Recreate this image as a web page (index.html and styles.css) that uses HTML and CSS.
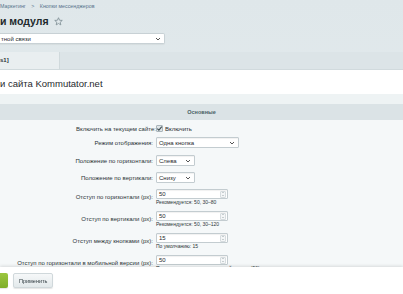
FILE: index.html
```html
<!DOCTYPE html>
<html lang="ru">
<head>
    <meta charset="UTF-8">
    <meta name="viewport" content="width=device-width, initial-scale=1.0">
    <title>Настройки модуля</title>
    <link rel="stylesheet" href="styles.css">
</head>
<body>
    <div class="crumbs">
        <a href="#">Маркетинг</a>
        <span class="sep">&gt;</span>
        <a href="#">Кнопки мессенджеров</a>
    </div>

    <div class="title-row">
        <h1>и модуля</h1>
        <svg class="star" width="9" height="9" viewBox="0 0 10 10">
            <path d="M5 0.8 L6.2 3.6 L9.2 3.8 L6.9 5.8 L7.6 8.8 L5 7.2 L2.4 8.8 L3.1 5.8 L0.8 3.8 L3.8 3.6 Z" fill="none" stroke="#7d8d93" stroke-width="0.9" stroke-linejoin="round"/>
        </svg>
    </div>

    <div class="site-select">
        <span>тной связи</span>
        <svg width="6" height="4" viewBox="0 0 6 4"><path d="M1 1 L3 3 L5 1" fill="none" stroke="#555" stroke-width="1"/></svg>
    </div>

    <div class="tabs">
        <div class="tab">s1]</div>
    </div>

    <div class="panel">
        <div class="panel-title">и сайта Kommutator.net</div>
        <div class="band"></div>
        <div class="section-head">Основные</div>

        <table class="form">
            <tr class="first">
                <td class="label">Включить на текущем сайте:</td>
                <td class="field">
                    <label class="check">
                        <span class="box">
                            <svg width="7" height="7" viewBox="0 0 7 7"><path d="M1.3 3.6 L2.9 5.1 L5.8 1.6" fill="none" stroke="#3d4b50" stroke-width="1.1"/></svg>
                        </span>
                        Включить
                    </label>
                </td>
            </tr>
            <tr>
                <td class="label">Режим отображения:</td>
                <td class="field">
                    <div class="select wide">
                        <span>Одна кнопка</span>
                        <svg width="6" height="4" viewBox="0 0 6 4"><path d="M1 1 L3 3 L5 1" fill="none" stroke="#555" stroke-width="1"/></svg>
                    </div>
                </td>
            </tr>
            <tr class="spaced">
                <td class="label">Положение по горизонтали:</td>
                <td class="field">
                    <div class="select">
                        <span>Слева</span>
                        <svg width="6" height="4" viewBox="0 0 6 4"><path d="M1 1 L3 3 L5 1" fill="none" stroke="#555" stroke-width="1"/></svg>
                    </div>
                </td>
            </tr>
            <tr>
                <td class="label">Положение по вертикали:</td>
                <td class="field">
                    <div class="select">
                        <span>Снизу</span>
                        <svg width="6" height="4" viewBox="0 0 6 4"><path d="M1 1 L3 3 L5 1" fill="none" stroke="#555" stroke-width="1"/></svg>
                    </div>
                </td>
            </tr>
            <tr>
                <td class="label">Отступ по горизонтали (px):</td>
                <td class="field">
                    <div class="num"><span>50</span><span class="spin"></span></div>
                    <div class="hint">Рекомендуется: 50, 30–80</div>
                </td>
            </tr>
            <tr>
                <td class="label">Отступ по вертикали (px):</td>
                <td class="field">
                    <div class="num"><span>50</span><span class="spin"></span></div>
                    <div class="hint">Рекомендуется: 50, 30–120</div>
                </td>
            </tr>
            <tr>
                <td class="label">Отступ между кнопками (px):</td>
                <td class="field">
                    <div class="num"><span>15</span><span class="spin"></span></div>
                    <div class="hint">По умолчанию: 15</div>
                </td>
            </tr>
            <tr>
                <td class="label">Отступ по горизонтали в мобильной версии (px):</td>
                <td class="field">
                    <div class="num"><span>50</span><span class="spin"></span></div>
                    <div class="hint">По умолчанию: как в десктопной версии (50)</div>
                </td>
            </tr>
        </table>
    </div>

    <div class="buttons">
        <button class="btn save" title="Сохранить"></button>
        <button class="btn">Применить</button>
    </div>
</body>
</html>
```

FILE: styles.css
```css
body {
    margin: 0;
    font-family: "Liberation Sans", Arial, sans-serif;
    font-size: 6px;
    color: #1f2a2e;
    background: linear-gradient(#dfe7ea, #e6edef);
    overflow: hidden;
    height: 294px;
}
.crumbs {
    padding: 3px 0 0 0;
    height: 8px;
    line-height: 7px;
    font-size: 5.3px;
    white-space: nowrap;
}
.crumbs a {
    color: #56738a;
    text-decoration: none;
}
.crumbs .sep {
    color: #56738a;
    margin: 0 4px;
}
.title-row {
    display: flex;
    align-items: center;
    gap: 5px;
    height: 14px;
    margin-top: 3px;
}
.title-row h1 {
    margin: 0;
    font-size: 10.5px;
    line-height: 14px;
    font-weight: bold;
    color: #21292c;
}
.star {
    margin-top: 1px;
}
.site-select {
    display: flex;
    align-items: center;
    justify-content: space-between;
    width: 160px;
    height: 9px;
    margin-top: 5px;
    padding: 0 3px 0 1px;
    background: #fff;
    border: 1px solid #c8d1d5;
    border-left: none;
    border-radius: 0 2px 2px 0;
    box-shadow: 0 1px 1px rgba(0,0,0,0.05);
}
.tabs {
    margin-top: 8px;
    height: 17px;
    background: #dce4e7;
    border-bottom: 1px solid #d1dadd;
}
.tab {
    width: 60px;
    height: 17px;
    line-height: 16px;
    background: #e9eef0;
    border-right: 1px solid #d0d9dc;
    font-weight: bold;
    color: #2b3438;
    box-sizing: border-box;
}
.panel {
    background: #f5f8f9;
}
.panel-title {
    height: 24px;
    padding-top: 8px;
    box-sizing: border-box;
    background: #fff;
    font-size: 9.5px;
    line-height: 11px;
    color: #1f2a2e;
}
.band {
    height: 10px;
    background: #eef3f4;
}
.section-head {
    height: 16px;
    line-height: 16px;
    text-align: center;
    background: #dbe3e6;
    color: #4a5f65;
    font-weight: bold;
    font-size: 5.5px;
}
.form {
    width: 100%;
    border-collapse: collapse;
    margin-top: 3px;
}
.form td {
    padding: 3px 0;
    vertical-align: middle;
}
.form .first td {
    padding: 2px 0;
}
.form .spaced td {
    padding-top: 4px;
}
.form .label {
    width: 153px;
    text-align: right;
    padding-right: 3px;
    color: #2a3336;
    white-space: nowrap;
}
.check {
    display: flex;
    align-items: center;
    gap: 2px;
    height: 7px;
}
.check .box {
    display: flex;
    width: 7px;
    height: 7px;
    box-sizing: border-box;
    background: #dfe5e8;
    border: 1px solid #aab5ba;
    border-radius: 1px;
    align-items: center;
    justify-content: center;
}
.check .box svg {
    flex: none;
}
.select {
    display: flex;
    align-items: center;
    justify-content: space-between;
    width: 39px;
    height: 11px;
    box-sizing: border-box;
    padding: 0 3px 0 2px;
    background: #fff;
    border: 1px solid #c3ccd0;
    border-radius: 1px;
    box-shadow: inset 0 1px 1px rgba(0,0,0,0.06);
}
.select.wide {
    width: 83px;
}
.num {
    display: flex;
    align-items: center;
    justify-content: space-between;
    width: 72px;
    height: 10px;
    box-sizing: border-box;
    padding: 0 1px 0 2px;
    background: #fff;
    border: 1px solid #c3ccd0;
    border-radius: 1px;
    box-shadow: inset 0 1px 1px rgba(0,0,0,0.06);
}
.spin {
    position: relative;
    width: 6px;
    height: 7px;
    box-sizing: border-box;
    border: 1px solid #d6dcdf;
    border-radius: 1px;
    background: #f4f6f7;
}
.spin::before,
.spin::after {
    content: "";
    position: absolute;
    left: 1px;
    border-left: 1.5px solid transparent;
    border-right: 1.5px solid transparent;
}
.spin::before {
    top: 0.5px;
    border-bottom: 1.5px solid #9aa5aa;
}
.spin::after {
    bottom: 0.5px;
    border-top: 1.5px solid #9aa5aa;
}
.hint {
    font-size: 5px;
    line-height: 5.5px;
    margin-top: 0.5px;
    color: #2c3538;
    white-space: nowrap;
}
.buttons {
    position: fixed;
    left: 0;
    right: 0;
    bottom: 0;
    height: 27px;
    background: #fff;
    box-shadow: 0 -1px 3px rgba(0,0,0,0.12);
    display: flex;
    align-items: center;
    gap: 5px;
}
.btn {
    height: 15px;
    padding: 0 5px;
    font-family: "Liberation Sans", Arial, sans-serif;
    font-size: 5.5px;
    color: #2f3b40;
    background: linear-gradient(#f6f8f9, #e3e9eb);
    border: 1px solid #d0d8db;
    border-radius: 2px;
    box-shadow: 0 1px 1px rgba(0,0,0,0.1);
}
.btn.save {
    width: 8px;
    padding: 0;
    border: none;
    background: linear-gradient(#9bc63f, #7fae2a);
    border-radius: 0 2px 2px 0;
}
```
